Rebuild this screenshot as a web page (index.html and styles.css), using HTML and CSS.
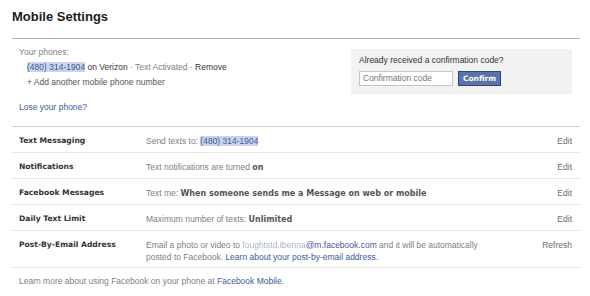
FILE: index.html
```html
<!DOCTYPE html>
<html>
<head>
<meta charset="utf-8">
<link rel="stylesheet" href="styles.css">
</head>
<body>
<div class="page">
  <h1 class="title">Mobile Settings</h1>
  <div class="phones">
    <div class="phones-left">
      <div class="line muted">Your phones:</div>
      <div class="line indent"><span class="blur-num">(480) 314-1904</span> on Verizon <span class="muted">· Text Activated ·</span> Remove</div>
      <div class="line indent add">+ Add another mobile phone number</div>
      <div class="line lose">Lose your phone?</div>
    </div>
    <div class="confirm-box">
      <div class="confirm-label">Already received a confirmation code?</div>
      <div class="confirm-row">
        <div class="code-input">Confirmation code</div>
        <div class="confirm-btn">Confirm</div>
      </div>
    </div>
  </div>
  <div class="settings">
    <div class="row">
      <div class="label">Text Messaging</div>
      <div class="value">Send texts to: <span class="blur-num">(480) 314-1904</span></div>
      <div class="action">Edit</div>
    </div>
    <div class="row">
      <div class="label">Notifications</div>
      <div class="value">Text notifications are turned <b>on</b></div>
      <div class="action">Edit</div>
    </div>
    <div class="row">
      <div class="label">Facebook Messages</div>
      <div class="value">Text me: <b>When someone sends me a Message on web or mobile</b></div>
      <div class="action">Edit</div>
    </div>
    <div class="row">
      <div class="label">Daily Text Limit</div>
      <div class="value">Maximum number of texts: <b>Unlimited</b></div>
      <div class="action">Edit</div>
    </div>
    <div class="row row-last">
      <div class="label">Post-By-Email Address</div>
      <div class="value">Email a photo or video to <span class="blur-mail">foughtstd.tbenna</span><span class="link">@m.facebook.com</span> and it will be automatically<br>posted to Facebook. <span class="link">Learn about your post-by-email address.</span></div>
      <div class="action">Refresh</div>
    </div>
  </div>
  <div class="footer">Learn more about using Facebook on your phone at <span class="link">Facebook Mobile</span>.</div>
</div>
</body>
</html>
```

FILE: styles.css
```css
body {
  margin: 0;
  background: #fff;
  font-family: "Liberation Sans", Arial, sans-serif;
  font-size: 8.5px;
  color: #333;
}
.page {
  width: 568px;
  margin-left: 12px;
}
.title {
  margin: 0;
  padding-top: 9px;
  height: 29px;
  font-size: 13px;
  line-height: 16px;
  font-weight: bold;
  color: #1c1c1c;
  border-bottom: 1px solid #b3b3b3;
}
.phones {
  display: flex;
  justify-content: space-between;
  align-items: flex-start;
  padding: 6px 8px 0 7px;
}
.line {
  line-height: 15px;
  white-space: nowrap;
}
.indent { padding-left: 8px; }
.muted { color: #808080; }
.add { color: #555; }
.lose { margin-top: 10px; color: #3b5998; }
.blur-num {
  color: #3b5998;
  background: #c9d4ea;
  filter: blur(0.4px);
}
.confirm-box {
  margin-top: 4px;
  width: 205px;
  height: 39px;
  padding: 6px 8px 0 8px;
  background: #f2f2f2;
}
.confirm-label {
  line-height: 11px;
  color: #333;
}
.confirm-row {
  display: flex;
  gap: 5px;
  margin-top: 5px;
}
.code-input {
  width: 89px;
  height: 13px;
  padding-left: 3px;
  line-height: 13px;
  background: #fff;
  border: 1px solid #bdc7d8;
  color: #777;
}
.confirm-btn {
  width: 41px;
  height: 13px;
  line-height: 13px;
  text-align: center;
  background: #5b74a8;
  border: 1px solid #29447e;
  color: #fff;
  font-family: "DejaVu Sans", Verdana, sans-serif;
  font-size: 7.5px;
  font-weight: bold;
}
.settings {
  margin-top: 11px;
  border-top: 1px solid #cfcfcf;
}
.row {
  display: flex;
  align-items: flex-start;
  padding: 8px 8px 5px 7px;
  line-height: 12px;
  border-bottom: 1px solid #e6e6e6;
}
.row-last {
  padding-bottom: 4px;
}
.label {
  width: 127px;
  font-family: "DejaVu Sans", Verdana, sans-serif;
  font-size: 7.6px;
  font-weight: bold;
  color: #333;
}
.value {
  flex: 1;
  color: #808080;
}
.value b {
  font-family: "DejaVu Sans", Verdana, sans-serif;
  font-size: 8px;
  line-height: 10px;
  color: #555;
}
.action {
  color: #6d6d6d;
}
.link { color: #3b5998; }
.blur-mail {
  color: #a9b3c9;
  filter: blur(0.6px);
}
.footer {
  padding: 8px 0 0 7px;
  line-height: 11px;
  color: #808080;
}
```
